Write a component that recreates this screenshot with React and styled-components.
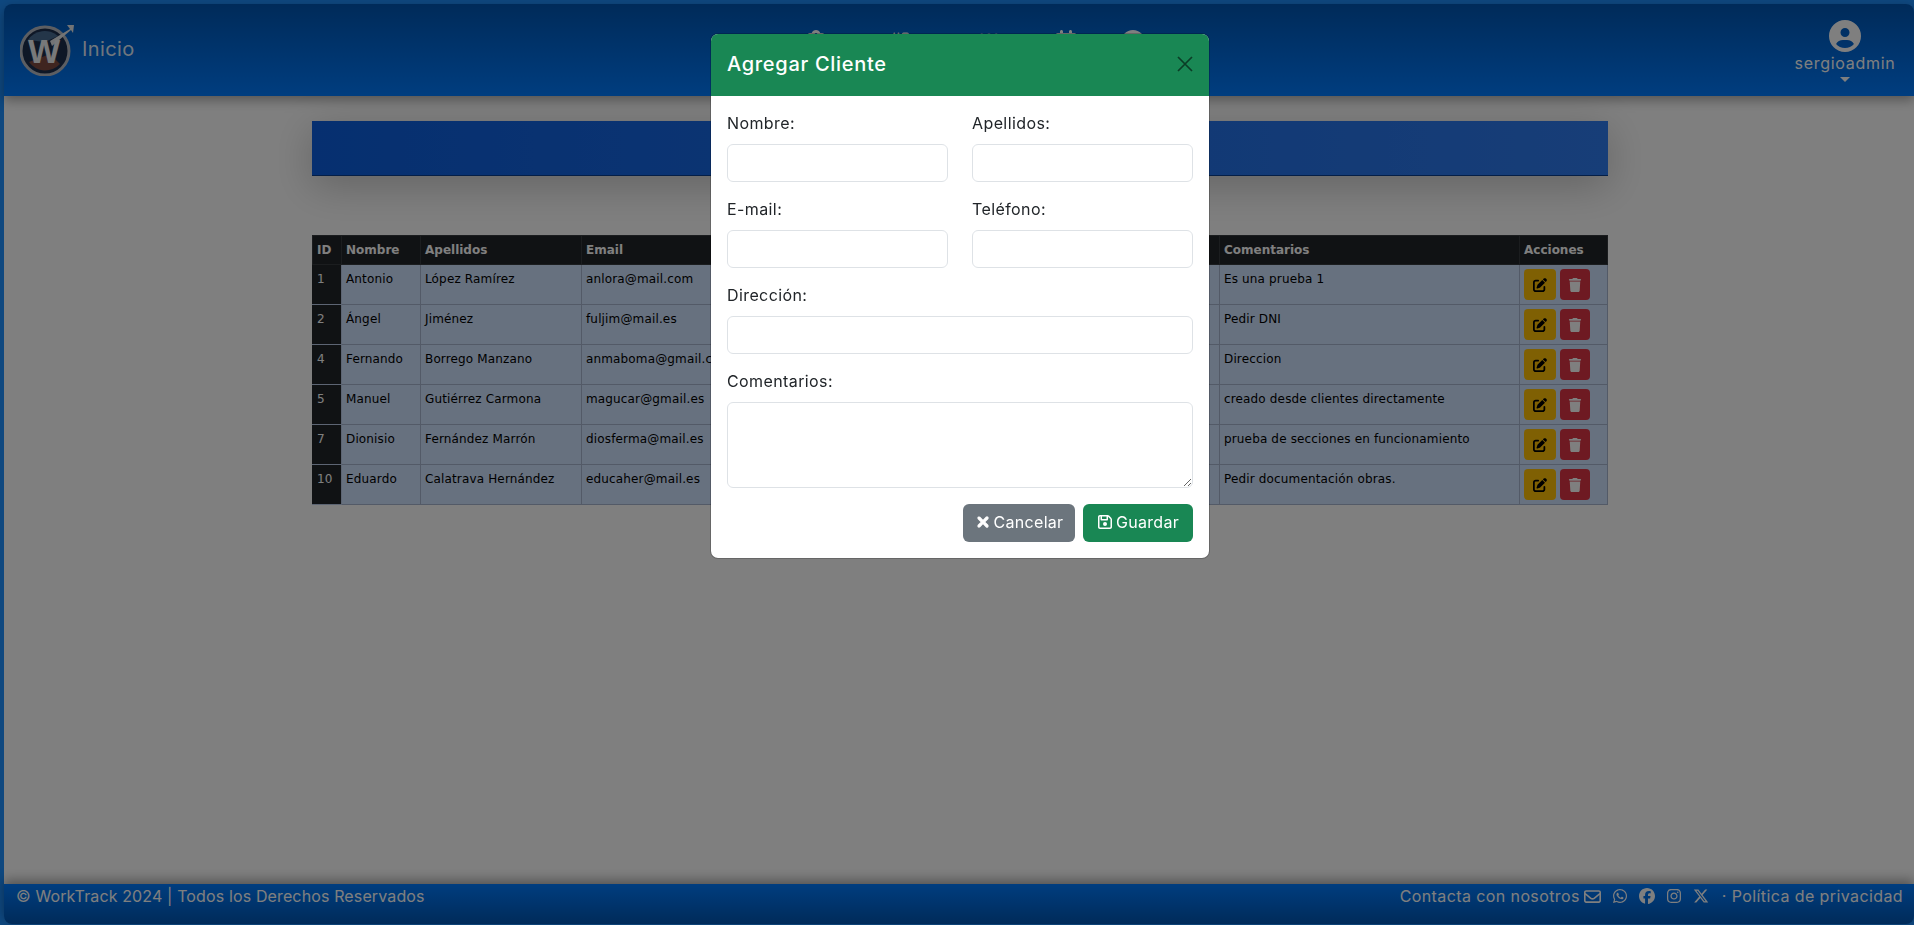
import React from 'react';
import styled, { createGlobalStyle } from 'styled-components';
import {
  FaCalendarDays, FaCircleQuestion, FaCircleUser, FaCity, FaClipboardList, FaFacebook, FaInstagram,
  FaPeopleGroup, FaRegEnvelope, FaRegFloppyDisk, FaPenToSquare, FaTrash, FaWhatsapp, FaXTwitter, FaXmark,
} from 'react-icons/fa6';

const sans = '"Inter", "Noto Sans", sans-serif';

const clientes = [
  { id: 1, nombre: 'Antonio', apellidos: 'López Ramírez', email: 'anlora@mail.com', comentarios: 'Es una prueba 1' },
  { id: 2, nombre: 'Ángel', apellidos: 'Jiménez', email: 'fuljim@mail.es', comentarios: 'Pedir DNI' },
  { id: 4, nombre: 'Fernando', apellidos: 'Borrego Manzano', email: 'anmaboma@gmail.com', comentarios: 'Direccion' },
  { id: 5, nombre: 'Manuel', apellidos: 'Gutiérrez Carmona', email: 'magucar@gmail.es', comentarios: 'creado desde clientes directamente' },
  { id: 7, nombre: 'Dionisio', apellidos: 'Fernández Marrón', email: 'diosferma@mail.es', comentarios: 'prueba de secciones en funcionamiento' },
  { id: 10, nombre: 'Eduardo', apellidos: 'Calatrava Hernández', email: 'educaher@mail.es', comentarios: 'Pedir documentación obras.' },
];

const navItems = [
  { icon: FaClipboardList, width: 85 },
  { icon: FaCity, width: 89 },
  { icon: FaPeopleGroup, width: 84 },
  { icon: FaCalendarDays, width: 70 },
  { icon: FaCircleQuestion, width: 64 },
];

const columnas = [
  { titulo: 'Nombre', width: 79 },
  { titulo: 'Apellidos', width: 161 },
  { titulo: 'Email', width: 160 },
  { titulo: 'Teléfono', width: 120 },
  { titulo: 'Dirección', width: 358 },
  { titulo: 'Comentarios', width: 300 },
  { titulo: 'Acciones', width: 88 },
];

function Logo() {
  return (
    <svg width="54" height="52" viewBox="0 0 54 52">
      <circle cx="25" cy="27" r="24" fill="#1d2f4d" stroke="#b9bdc4" strokeWidth="3" />
      <path d="M9 38 A20 20 0 0 0 40 40 L30 30 Z" fill="#a8563a" opacity="0.7" />
      <path d="M8 16 A20 20 0 0 1 38 12 L25 18 Z" fill="#5b86b0" opacity="0.7" />
      <path d="M30 17 L50 5 L47 1 L54 1 L53 9 L51 6 L32 22 Z" fill="#e6e8ea" />
      <text x="24" y="39" textAnchor="middle" fontFamily="Liberation Sans, sans-serif" fontWeight="700" fontSize="34" fill="#f1f2f4">W</text>
    </svg>
  );
}

export default function App() {
  return (
    <>
      <GlobalStyle />
      <Page>
        <Navbar>
          <Brand>
            <Logo />
            <BrandLink>Inicio</BrandLink>
          </Brand>
          <NavLinks>
            {navItems.map((item, i) => (
              <NavItem key={i} $width={item.width}>
                <item.icon />
              </NavItem>
            ))}
          </NavLinks>
          <UserMenu>
            <FaCircleUser />
            <UserName>sergioadmin</UserName>
            <Caret />
          </UserMenu>
        </Navbar>

        <Main>
          <Banner />
          <Table>
            <thead>
              <tr>
                <Th $width={29}>ID</Th>
                {columnas.map((c) => (
                  <Th key={c.titulo} $width={c.width}>{c.titulo}</Th>
                ))}
              </tr>
            </thead>
            <tbody>
              {clientes.map((c) => (
                <tr key={c.id}>
                  <RowHead>{c.id}</RowHead>
                  <Td>{c.nombre}</Td>
                  <Td>{c.apellidos}</Td>
                  <Td>{c.email}</Td>
                  <Td />
                  <Td />
                  <Td>{c.comentarios}</Td>
                  <Td>
                    <Actions>
                      <ActionButton $bg="#ffc107" $color="#000" $width={32}><FaPenToSquare /></ActionButton>
                      <ActionButton $bg="#dc3545" $color="#fff" $width={30}><FaTrash /></ActionButton>
                    </Actions>
                  </Td>
                </tr>
              ))}
            </tbody>
          </Table>
        </Main>

        <Footer>
          <span>© WorkTrack 2024 | Todos los Derechos Reservados</span>
          <FooterLinks>
            <span>Contacta con nosotros</span>
            <MailIcon><FaRegEnvelope /></MailIcon>
            <Socials>
              <FaWhatsapp />
              <FaFacebook />
              <FaInstagram />
              <FaXTwitter />
            </Socials>
            <span>· Política de privacidad</span>
          </FooterLinks>
        </Footer>
      </Page>

      <Backdrop />
      <ModalLayer>
        <Modal>
          <ModalHeader>
            <ModalTitle>Agregar Cliente</ModalTitle>
            <CloseButton aria-label="Cerrar">
              <svg width="16" height="16" viewBox="0 0 16 16">
                <path d="M1 1 L15 15 M15 1 L1 15" stroke="currentColor" strokeWidth="1.7" />
              </svg>
            </CloseButton>
          </ModalHeader>
          <ModalBody>
            <FormGrid>
              <Field>
                <Label>Nombre:</Label>
                <Input />
              </Field>
              <Field>
                <Label>Apellidos:</Label>
                <Input />
              </Field>
              <Field>
                <Label>E-mail:</Label>
                <Input />
              </Field>
              <Field>
                <Label>Teléfono:</Label>
                <Input />
              </Field>
              <Field $wide>
                <Label>Dirección:</Label>
                <Input />
              </Field>
              <Field $wide>
                <Label>Comentarios:</Label>
                <TextArea />
              </Field>
            </FormGrid>
            <ModalActions>
              <FormButton $bg="#6c757d" $width={112}><BoldX />Cancelar</FormButton>
              <FormButton $bg="#198754" $width={110}><FaRegFloppyDisk />Guardar</FormButton>
            </ModalActions>
          </ModalBody>
        </Modal>
      </ModalLayer>
    </>
  );
}

const GlobalStyle = createGlobalStyle`
  * {
    box-sizing: border-box;
  }
  html, body {
    margin: 0;
    height: 100%;
    overflow: hidden;
  }
  body {
    background: #1e90ff;
    font-family: ${sans};
  }
`;

const Page = styled.div`
  height: 925px;
  display: flex;
  flex-direction: column;
  padding: 4px 0 1px 4px;
`;

const Navbar = styled.nav`
  height: 92px;
  flex-shrink: 0;
  display: flex;
  justify-content: space-between;
  padding: 0 19px 0 16px;
  background: linear-gradient(180deg, #0056b3, #007bff);
  border-top-left-radius: 8px;
  border-top-right-radius: 8px;
  box-shadow: 0 4px 12px rgba(0, 0, 0, 0.35);
  position: relative;
  z-index: 1;
`;

const Brand = styled.div`
  display: flex;
  align-items: center;
  gap: 8px;
  width: 200px;
`;

const BrandLink = styled.span`
  color: rgba(255, 255, 255, 0.9);
  font-size: 20px;
  line-height: 28px;
  letter-spacing: 0.4px;
  margin-bottom: 2px;
`;

const NavLinks = styled.div`
  display: flex;
  padding-top: 26px;
  margin-left: -77px;
`;

const NavItem = styled.div`
  width: ${(p) => p.$width}px;
  display: flex;
  justify-content: center;
  color: #fff;
  font-size: 24px;
`;

const UserMenu = styled.div`
  width: 100px;
  display: flex;
  flex-direction: column;
  align-items: center;
  padding-top: 16px;
  color: #fff;

  > svg {
    font-size: 32px;
  }
`;

const UserName = styled.span`
  font-size: 16px;
  line-height: 22px;
  letter-spacing: 0.7px;
  white-space: nowrap;
`;

const Caret = styled.span`
  margin-top: 3px;
  border-top: 5px solid #fff;
  border-left: 5px solid transparent;
  border-right: 5px solid transparent;
`;

const Main = styled.main`
  flex: 1;
  background: #fff;
  padding: 25px 306px 0 308px;
`;

const Banner = styled.div`
  height: 55px;
  background: linear-gradient(90deg, #0c5fe0, #2f7cf0);
  border-bottom: 1px solid #0b3f8f;
  box-shadow: 0 10px 40px rgba(0, 0, 0, 0.22);
  margin-bottom: 59px;
`;

const Table = styled.table`
  width: 1295px;
  table-layout: fixed;
  border-collapse: collapse;
  font-family: "DejaVu Sans", sans-serif;
  font-size: 12px;
  line-height: 18px;
`;

const Th = styled.th`
  width: ${(p) => p.$width}px;
  height: 29px;
  padding: 4px;
  text-align: left;
  color: #fff;
  background: #212529;
  border: 1px solid #373b3e;
`;

const RowHead = styled.th`
  padding: 5px 4px 3px;
  vertical-align: top;
  text-align: left;
  font-weight: 400;
  color: #fff;
  background: #212529;
  border: 1px solid #bacbe6;
  border-left-color: #212529;
`;

const Td = styled.td`
  height: 40px;
  padding: 5px 4px 3px;
  vertical-align: top;
  color: #000;
  background: #cfe2ff;
  border: 1px solid #a6b5ce;
  white-space: nowrap;
  letter-spacing: 0.15px;
`;

const Actions = styled.div`
  display: flex;
  gap: 4px;
  margin-top: -1px;
`;

const ActionButton = styled.button`
  width: ${(p) => p.$width}px;
  height: 31px;
  padding: 0;
  display: flex;
  align-items: center;
  justify-content: center;
  border: none;
  border-radius: 4px;
  background: ${(p) => p.$bg};
  color: ${(p) => p.$color};
  font-size: 14px;
`;

const Footer = styled.footer`
  height: 40px;
  flex-shrink: 0;
  display: flex;
  justify-content: space-between;
  padding: 1px 11px 0 12px;
  background: linear-gradient(180deg, #007bff, #0056b3);
  border-bottom-left-radius: 8px;
  border-bottom-right-radius: 8px;
  box-shadow: 0 -4px 12px rgba(0, 0, 0, 0.35);
  position: relative;
  color: #fff;
  font-size: 16px;
  line-height: 22px;
  letter-spacing: 0.13px;
`;

const FooterLinks = styled.div`
  display: flex;
  align-items: flex-start;
  letter-spacing: 0.4px;
`;

const MailIcon = styled.span`
  display: flex;
  height: 22px;
  align-items: center;
  margin-left: 4px;
  font-size: 17px;
`;

const Socials = styled.span`
  display: flex;
  height: 22px;
  align-items: center;
  gap: 11px;
  margin: 0 13px 0 11px;
  font-size: 16px;
`;

const Backdrop = styled.div`
  position: fixed;
  inset: 0;
  z-index: 10;
  background: rgba(0, 0, 0, 0.5);
`;

const ModalLayer = styled.div`
  position: fixed;
  inset: 0;
  z-index: 11;
  display: flex;
  justify-content: center;
  align-items: flex-start;
  padding: 33px 0 0 6px;
`;

const Modal = styled.div`
  width: 500px;
  height: 526px;
  background: #fff;
  border: 1px solid rgba(0, 0, 0, 0.2);
  border-radius: 8px;
  background-clip: padding-box;
  overflow: hidden;
`;

const ModalHeader = styled.div`
  height: 62px;
  display: flex;
  align-items: center;
  justify-content: space-between;
  padding: 0 16px 2px;
  background: #198754;
`;

const ModalTitle = styled.h5`
  margin: 0;
  color: #fff;
  font-size: 20px;
  font-weight: 500;
  line-height: 30px;
  letter-spacing: 0.7px;
`;

const CloseButton = styled.button`
  padding: 0;
  display: flex;
  border: none;
  background: none;
  color: #0b3d26;
`;

const ModalBody = styled.div`
  padding: 16px;
`;

const FormGrid = styled.div`
  display: grid;
  grid-template-columns: 1fr 1fr;
  column-gap: 24px;
  row-gap: 16px;
`;

const Field = styled.div`
  display: flex;
  flex-direction: column;
  grid-column: ${(p) => (p.$wide ? '1 / -1' : 'auto')};
`;

const Label = styled.label`
  margin: -1px 0 9px;
  color: #212529;
  font-size: 16px;
  line-height: 24px;
  letter-spacing: 0.4px;
`;

const Input = styled.input`
  height: 38px;
  padding: 6px 12px;
  background: #fff;
  border: 1px solid #dee2e6;
  border-radius: 6px;
`;

const TextArea = styled.textarea`
  height: 86px;
  padding: 6px 12px;
  background: #fff;
  border: 1px solid #dee2e6;
  border-radius: 6px;
`;

const ModalActions = styled.div`
  display: flex;
  justify-content: flex-end;
  gap: 8px;
  margin-top: 16px;
`;

const FormButton = styled.button`
  width: ${(p) => p.$width}px;
  height: 38px;
  padding: 0 0 2px;
  display: flex;
  align-items: center;
  justify-content: center;
  gap: 3px;
  border: none;
  border-radius: 6px;
  background: ${(p) => p.$bg};
  color: #fff;
  font-family: ${sans};
  font-size: 16px;
  letter-spacing: 0.3px;

  svg {
    font-size: 16px;
  }
`;

const BoldX = styled(FaXmark)`
  stroke: currentColor;
  stroke-width: 40px;
`;
